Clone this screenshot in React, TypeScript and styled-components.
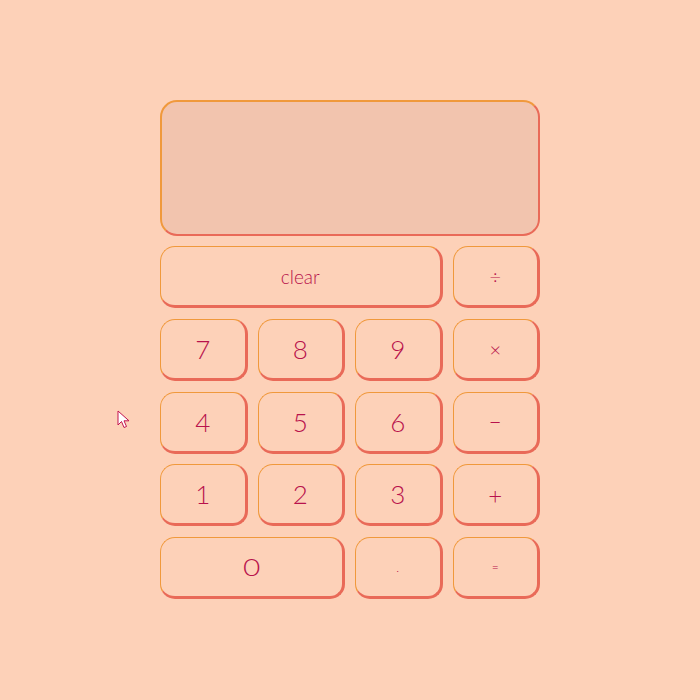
import React from "react";
import styled, { createGlobalStyle } from "styled-components";

const Global = createGlobalStyle`
  html, body { margin: 0; padding: 0; background: #fdd1b8; }
  body { font-family: "Lato", "Noto Sans", sans-serif; }
`;

const Page = styled.div`
  box-sizing: border-box;
  width: 700px;
  height: 700px;
  display: flex;
  align-items: flex-start;
  justify-content: center;
  padding-top: 100px;
  position: relative;
  background: #fdd1b8;
`;

const Calc = styled.div`
  width: 380px;
  display: flex;
  flex-direction: column;
  gap: 10px;
`;

const Display = styled.div`
  box-sizing: border-box;
  height: 136px;
  border-radius: 17px;
  background: #f2c4ae;
  border: 2px solid #f0993c;
  border-right-color: #e96a58;
  border-bottom-color: #e96a58;
`;

const Keys = styled.div`
  display: grid;
  grid-template-columns: repeat(4, 1fr);
  grid-auto-rows: 62px;
  column-gap: 10px;
  row-gap: 10.75px;
`;

const Key = styled.button<{ $span?: number; $size?: number }>`
  box-sizing: border-box;
  grid-column: span ${(p) => p.$span ?? 1};
  background: #fdd1b8;
  border: 1px solid #f0993c;
  border-right: 3px solid #e96a58;
  border-bottom: 3px solid #e96a58;
  border-radius: 15px;
  color: #b8124c;
  font-family: "Lato", "Noto Sans", sans-serif;
  font-weight: 300;
  font-size: ${(p) => p.$size ?? 26}px;
  display: flex;
  align-items: center;
  justify-content: center;
  padding: 0;
  cursor: pointer;
`;

const Zero = styled.span`
  display: inline-block;
  transform: scaleX(1.3);
`;

const Cursor = styled.svg`
  position: absolute;
  left: 117px;
  top: 410px;
  width: 14px;
  height: 20px;
`;

const keys: { label: React.ReactNode; span?: number; size?: number }[] = [
  { label: "clear", span: 3, size: 19 },
  { label: "÷", size: 20 },
  { label: "7" },
  { label: "8" },
  { label: "9" },
  { label: "×", size: 20 },
  { label: "4" },
  { label: "5" },
  { label: "6" },
  { label: "−", size: 22 },
  { label: "1" },
  { label: "2" },
  { label: "3" },
  { label: "+", size: 24 },
  { label: <Zero>0</Zero>, span: 2, size: 23 },
  { label: ".", size: 12 },
  { label: "=", size: 12 },
];

export default function App() {
  return (
    <>
      <Global />
      <Page>
        <Calc>
          <Display />
          <Keys>
            {keys.map((k, i) => (
              <Key key={i} $span={k.span} $size={k.size}>
                {k.label}
              </Key>
            ))}
          </Keys>
        </Calc>
        <Cursor viewBox="0 0 14 20">
          <path
            d="M1 1 L1 15 L4.5 11.5 L7 17.5 L9.5 16.5 L7 10.8 L12 10.8 Z"
            fill="#ffffff"
            stroke="#c2134f"
            strokeWidth="1"
            strokeLinejoin="miter"
          />
        </Cursor>
      </Page>
    </>
  );
}
